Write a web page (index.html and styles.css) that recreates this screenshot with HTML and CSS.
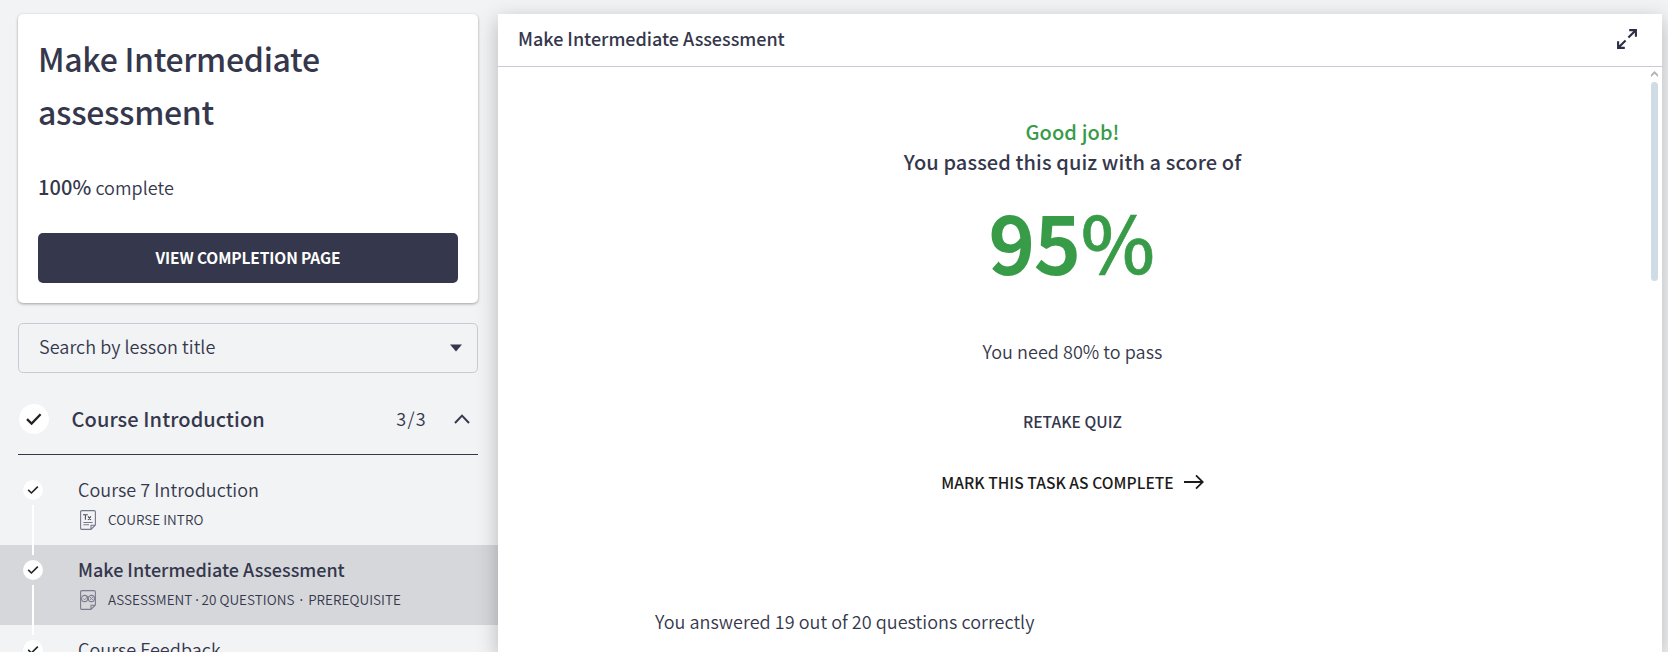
FILE: index.html
```
<!DOCTYPE html>
<html lang="en">
<head>
<meta charset="utf-8">
<title>Make Intermediate Assessment</title>
<link rel="stylesheet" href="styles.css">
</head>
<body>
<div class="page">
  <aside class="sidebar">
    <section class="card">
      <h1 class="card-title">Make Intermediate<br>assessment</h1>
      <p class="progress"><b>100%</b><span>complete</span></p>
      <button class="btn">VIEW COMPLETION PAGE</button>
    </section>
    <div class="search">
      <span>Search by lesson title</span>
      <svg width="12" height="8" viewBox="0 0 12 8"><path d="M0 .5h12L6 7.5z" fill="#35374c"/></svg>
    </div>
    <div class="chapter">
      <span class="dot dot-lg"><svg width="18" height="14" viewBox="0 0 18 14"><path d="M2 7.2 6.6 11.6 15.6 2.2" fill="none" stroke="#222" stroke-width="2.3"/></svg></span>
      <span class="chapter-name">Course Introduction</span>
      <span class="count">3/3</span>
      <svg class="chev" width="18" height="12" viewBox="0 0 18 12"><path d="M2 10 9 2.6 16 10" fill="none" stroke="#35374c" stroke-width="2"/></svg>
    </div>
    <ul class="lessons">
      <li class="lesson">
        <span class="rail"><span class="dot"><svg width="12" height="10" viewBox="0 0 12 10"><path d="M1.2 4.9 4.4 8 10.8 1.6" fill="none" stroke="#222" stroke-width="1.6"/></svg></span><span class="link"></span></span>
        <div class="lesson-body">
          <div class="lesson-name">Course 7 Introduction</div>
          <div class="meta">
            <svg width="16" height="20" viewBox="0 0 16 20" fill="none" stroke="#75778a" stroke-width="1.1"><path d="M2 .6h12Q15.4.6 15.4 2v13L11 19.4H2Q.6 19.4.6 18V2Q.6.6 2 .6zM11 19.2V15.2h4.2M3.4 12.5h9.200M3.400 14.700h5.600"/><path d="M3 4.700h4.800M5.400 4.700V9.800M8 6.300l2.900 3.500M10.900 6.300 8 9.800" stroke="#4a4c62"/></svg>
            <span>COURSE INTRO</span>
          </div>
        </div>
      </li>
      <li class="lesson active">
        <span class="rail"><span class="dot"><svg width="12" height="10" viewBox="0 0 12 10"><path d="M1.2 4.9 4.4 8 10.8 1.6" fill="none" stroke="#222" stroke-width="1.6"/></svg></span><span class="link"></span></span>
        <div class="lesson-body">
          <div class="lesson-name">Make Intermediate Assessment</div>
          <div class="meta">
            <svg width="16" height="20" viewBox="0 0 16 20" fill="none" stroke="#7b7d8d" stroke-width="1.1"><path d="M2 .6h12Q15.4.6 15.4 2v13L11 19.4H2Q.6 19.4.6 18V2Q.6.6 2 .6zM11 19.2V15.2h4.2"/><circle cx="4.600" cy="8.500" r="3.1"/><circle cx="11.400" cy="8.500" r="3.1"/><path d="M3.200 8.400 4.600 9.800 8 6.300M9.900 7l3 3M12.900 7 9.900 10" stroke-width=".9"/></svg>
            <span>ASSESSMENT</span><span class="sep">·</span><span>20 QUESTIONS</span><span class="sep wide">·</span><span>PREREQUISITE</span>
          </div>
        </div>
      </li>
      <li class="lesson">
        <span class="rail"><span class="dot"><svg width="12" height="10" viewBox="0 0 12 10"><path d="M1.2 4.9 4.4 8 10.8 1.6" fill="none" stroke="#222" stroke-width="1.6"/></svg></span><span class="link"></span></span>
        <div class="lesson-body">
          <div class="lesson-name">Course Feedback</div>
        </div>
      </li>
    </ul>
  </aside>
  <main class="panel">
    <header class="panel-head">
      <span>Make Intermediate Assessment</span>
      <svg width="22" height="22" viewBox="0 0 22 22" fill="none" stroke="#2c2e45" stroke-width="2.1"><path d="M12.400 9.600 19.800 2.200M13.200 2.100H19.900V8.800M9.600 12.400 2.200 19.800M2.100 13.200V19.900H8.800"/></svg>
    </header>
    <div class="panel-body">
      <div class="result">
        <div class="good">Good job!</div>
        <div class="passed">You passed this quiz with a score of</div>
        <div class="score">95<span class="unit">%</span></div>
        <div class="need">You need 80% to pass</div>
        <div class="retake">RETAKE QUIZ</div>
        <div class="mark"><span>MARK THIS TASK AS COMPLETE</span><svg width="20" height="16" viewBox="0 0 20 16" fill="none" stroke="#1b1b1b" stroke-width="1.800"><path d="M0 8H19M12 1.300 18.800 8 12 14.700"/></svg></div>
        <div class="answered">You answered 19 out of 20 questions correctly</div>
      </div>
      <div class="scroll">
        <svg width="7" height="6" viewBox="0 0 7 6"><path d="M0 6V3.500L3.500 0 7 3.500V6L3.500 2.700z" fill="#b4b4b4"/></svg>
        <span class="thumb"></span>
      </div>
    </div>
  </main>
</div>
</body>
</html>
```
FILE: styles.css
```
* { box-sizing: border-box; margin: 0; padding: 0; }
body {
  background: #f1f3f5;
  color: #35374c;
  font-family: "Noto Sans CJK SC", "Noto Sans", sans-serif;
  font-weight: 350;
  letter-spacing: .04px;
  overflow: hidden;
}
.page { display: flex; height: 652px; overflow: hidden; }
.page span { white-space: nowrap; }
.sidebar { width: 498px; flex: none; padding-top: 14px; }
.card {
  margin: 0 20px 0 18px;
  height: 289px;
  padding: 18px 20px 20px;
  background: #fff;
  border-radius: 5px;
  box-shadow: 0 1px 3px rgba(0, 0, 0, .35);
}
.card-title { font-size: 32px; font-weight: 500; line-height: 53px; letter-spacing: -.3px; }
.progress { margin-top: 29px; line-height: 40px; font-size: 18px; display: flex; align-items: baseline; gap: 4px; }
.progress b { font-size: 20px; font-weight: 500; letter-spacing: .1px; }
.btn {
  display: flex; align-items: center; justify-content: center;
  width: 420px; height: 50px; margin-top: 26px; padding-bottom: 2px;
  border: 0; border-radius: 5px;
  background: #35374c; color: #fff;
  font: 700 15.5px/24px "Noto Sans CJK SC", "Noto Sans", sans-serif;
  letter-spacing: -.12px;
}
.search {
  display: flex; align-items: center; justify-content: space-between;
  margin: 20px 20px 0 18px; height: 50px; padding: 0 15px 0 20px;
  border: 1px solid #c9cad6; border-radius: 5px;
  font-size: 18px; line-height: 24px;
}
.search span { padding-bottom: 4px; }
.chapter {
  display: flex; align-items: center;
  margin: 11px 20px 0 18px; height: 71px;
  border-bottom: 1px solid #35374c;
}
.dot {
  display: flex; align-items: center; justify-content: center;
  width: 20px; height: 20px; flex: none;
  background: #fff; border-radius: 50%;
}
.dot-lg { width: 30px; height: 30px; margin-left: 1px; }
.chapter-name { flex: 1; margin-left: 22.5px; font-size: 20px; font-weight: 500; line-height: 30px; letter-spacing: .1px; }
.count { font-size: 18px; letter-spacing: 1.3px; padding-bottom: 2px; }
.chev { margin: 0 7px 0 26px; }
.lessons { list-style: none; margin-top: 10px; }
.lesson { display: flex; height: 80px; padding: 15px 0 0 23px; }
.active { background: #d6d7db; }
.rail { display: flex; flex-direction: column; align-items: center; width: 20px; height: 75px; gap: 5px; }
.link { width: 2px; height: 50px; background: #fff; flex: none; position: relative; z-index: 1; }
.lesson-body { margin: -3px 0 0 35px; }
.lesson-name { font-size: 18px; line-height: 24px; }
.active .lesson-name { font-weight: 500; letter-spacing: -.02px; }
.meta { display: flex; align-items: center; height: 20px; margin: 9px 0 0 2px; font-size: 13.5px; line-height: 18px; }
.meta span { padding-bottom: 2px; }
.meta svg { margin-right: 12px; }
.meta .sep { margin: 0 2.6px 0 2.8px; padding-bottom: 0; font-family: "Noto Sans", sans-serif; font-weight: 400; }
.meta .wide { margin: 0 5px; }
.panel {
  display: flex; flex-direction: column;
  width: 1164px; margin-top: 14px; background: #fff;
  box-shadow: 0 6px 20px rgba(0, 0, 0, .25);
}
.panel-head {
  display: flex; align-items: center; justify-content: space-between;
  height: 53px; flex: none; padding: 0 24px 2px 20px;
  border-bottom: 1px solid #c9cad6;
  font-size: 18px; font-weight: 500; line-height: 24px; letter-spacing: -.02px;
}
.panel-head span { padding-bottom: 2px; }
.panel-body { display: flex; flex: 1; }
.result { width: 1149px; flex: none; display: flex; flex-direction: column; align-items: center; }
.good, .passed { font-size: 20px; font-weight: 500; line-height: 30px; letter-spacing: .1px; }
.good { margin-top: 50px; color: #389b48; }
.score {
  margin-top: 13px; font-size: 79px; font-weight: 500; line-height: 100px; color: #389b48;
  letter-spacing: .7px;
  -webkit-text-stroke: 2px #389b48;
}
.unit { -webkit-text-stroke-width: .6px; }
.need { margin-top: 46px; font-size: 18px; line-height: 30px; }
.retake { margin-top: 40px; font-size: 15.6px; font-weight: 500; line-height: 30px; }
.mark { margin-top: 31px; display: flex; align-items: center; gap: 10px; color: #1b1b1b; font-size: 15.6px; font-weight: 500; line-height: 30px; }
.answered { margin-top: 109px; align-self: flex-start; margin-left: 157px; font-size: 18px; line-height: 30px; }
.scroll { display: flex; flex-direction: column; align-items: center; margin-left: 4px; padding-top: 4px; gap: 5px; width: 7px; }
.thumb { width: 7px; height: 199px; border-radius: 4px; background: #d0dce5; }
```
